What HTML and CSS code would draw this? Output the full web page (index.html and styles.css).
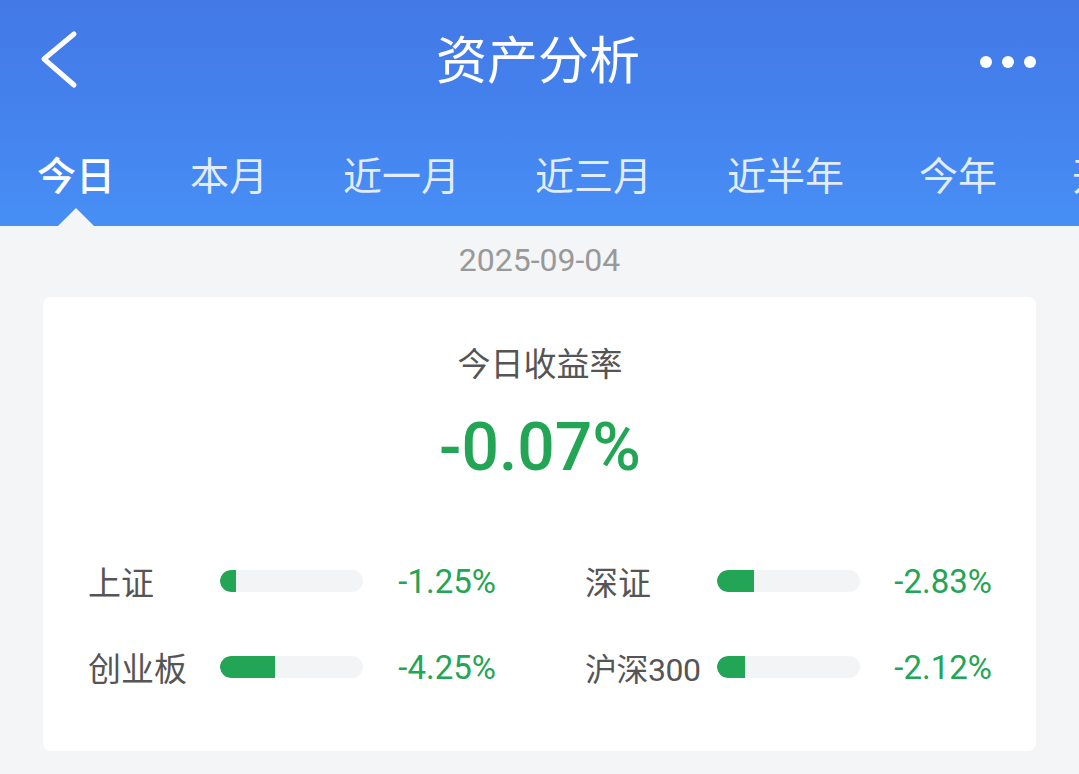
FILE: index.html
```html
<!DOCTYPE html>
<html lang="zh-CN">
<head>
    <meta charset="UTF-8">
    <meta name="viewport" content="width=device-width, initial-scale=1.0">
    <title>资产分析</title>
    <link rel="stylesheet" href="styles.css">
</head>
<body>
    <div id="header">
        <div class="top-bar">
            <span class="back">
                <svg width="40" height="60" viewBox="0 0 40 60"><path d="M34 5 L4 30 L34 56" fill="none" stroke="#fff" stroke-width="5" stroke-linecap="round" stroke-linejoin="round"/></svg>
            </span>
            <h1 class="title">资产分析</h1>
            <span class="more"><i></i><i></i><i></i></span>
        </div>
        <ul class="tabs">
            <li class="active">今日</li>
            <li>本月</li>
            <li>近一月</li>
            <li>近三月</li>
            <li>近半年</li>
            <li>今年</li>
            <li>开户以来</li>
        </ul>
    </div>
    <div id="main">
        <div class="date">2025-09-04</div>
        <div class="card">
            <div class="card-title">今日收益率</div>
            <div class="rate">-0.07%</div>
            <ul class="index-list">
                <li>
                    <span class="name">上证</span>
                    <span class="bar"><span class="fill" style="width:16px"></span></span>
                    <span class="val">-1.25%</span>
                </li>
                <li>
                    <span class="name">深证</span>
                    <span class="bar"><span class="fill" style="width:37px"></span></span>
                    <span class="val">-2.83%</span>
                </li>
                <li>
                    <span class="name">创业板</span>
                    <span class="bar"><span class="fill" style="width:55px"></span></span>
                    <span class="val">-4.25%</span>
                </li>
                <li>
                    <span class="name">沪深300</span>
                    <span class="bar"><span class="fill" style="width:28px"></span></span>
                    <span class="val">-2.12%</span>
                </li>
            </ul>
        </div>
    </div>
</body>
</html>
```

FILE: styles.css
```css
*{
    margin: 0;
    padding: 0;
}
ul{
    list-style: none;
}
body{
    width: 1079px;
    height: 774px;
    overflow: hidden;
    background: #f4f5f6;
    font-family: "Roboto", "Noto Sans CJK SC", sans-serif;
}
/* 顶部 */
#header{
    height: 226px;
    background: linear-gradient(180deg, #4279e6 0%, #4584ef 60%, #478ff5 100%);
    color: #fff;
}
#header .top-bar{
    height: 116px;
    display: flex;
    align-items: center;
    justify-content: space-between;
    padding: 0 43px 0 40px;
}
.back{
    width: 120px;
    display: flex;
    align-items: center;
}
.back svg{
    display: block;
    margin-top: 2px;
}
.title{
    font-family: "Noto Sans CJK SC", sans-serif;
    font-size: 51px;
    font-weight: 400;
    line-height: 1;
    margin-top: -2px;
}
.more{
    width: 120px;
    display: flex;
    justify-content: flex-end;
    gap: 10px;
    margin-top: 8px;
}
.more i{
    width: 12px;
    height: 12px;
    border-radius: 50%;
    background: #fff;
}
.tabs{
    height: 110px;
    display: flex;
    align-items: center;
    gap: 75px;
    padding-left: 37px;
    white-space: nowrap;
    overflow: hidden;
    font-family: "Noto Sans CJK SC", sans-serif;
    font-size: 39px;
    line-height: 1;
    color: rgba(255,255,255,0.85);
}
.tabs li{
    position: relative;
    margin-top: 4px;
}
.tabs .active{
    color: #fff;
    font-weight: 500;
}
.tabs .active::after{
    content: "";
    position: absolute;
    left: 50%;
    top: 54px;
    margin-left: -18px;
    border: 18px solid transparent;
    border-top: 0;
    border-bottom: 18px solid #f4f5f6;
}
/* 内容 */
#main{
    padding: 0 43px;
}
.date{
    height: 71px;
    display: flex;
    align-items: center;
    justify-content: center;
    font-size: 32px;
    color: #999;
    padding-bottom: 4px;
    box-sizing: border-box;
}
.card{
    height: 454px;
    background: #fff;
    border-radius: 8px;
    padding: 40px 44px 0 45px;
    box-sizing: border-box;
    text-align: center;
}
.card-title{
    font-family: "Noto Sans CJK SC", sans-serif;
    font-size: 33px;
    line-height: 50px;
    color: #555;
}
.rate{
    font-size: 66px;
    font-weight: 500;
    line-height: 80px;
    color: #22a554;
    margin-top: 21px;
}
.index-list{
    display: grid;
    grid-template-columns: 408px 407px;
    column-gap: 89px;
    row-gap: 36px;
    margin-top: 68px;
    text-align: left;
}
.index-list li{
    height: 50px;
    display: flex;
    align-items: center;
}
.name{
    width: 132px;
    font-size: 33px;
    color: #555;
    font-family: "Noto Sans CJK SC", sans-serif;
    white-space: nowrap;
}
.index-list li:nth-child(4) .name{
    font-family: "Roboto", "Noto Sans CJK SC", sans-serif;
    font-size: 32px;
    letter-spacing: -0.5px;
}
.bar{
    width: 143px;
    height: 22px;
    border-radius: 11px;
    background: #f3f4f5;
    overflow: hidden;
}
.bar .fill{
    display: block;
    height: 100%;
    background: #22a554;
    border-radius: 11px 0 0 11px;
}
.val{
    flex: 1;
    text-align: right;
    font-size: 33px;
    color: #22a554;
}
```
